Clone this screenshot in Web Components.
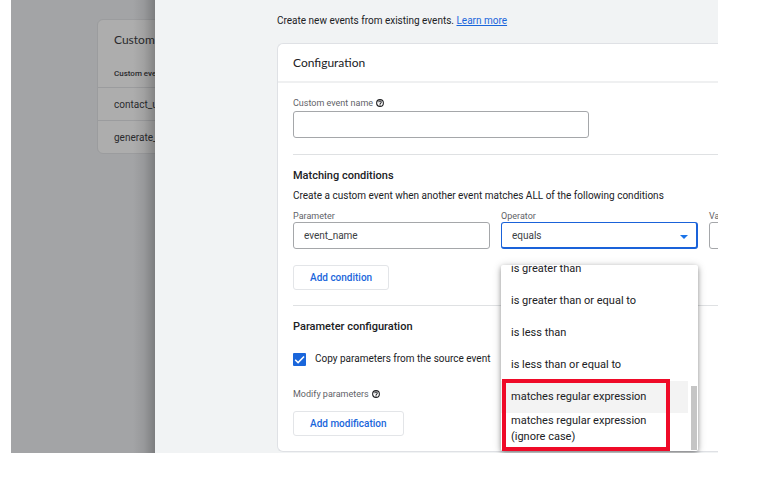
<!DOCTYPE html>
<html lang="en">
<head>
<meta charset="utf-8">
<title>Create event</title>
<style>
body{margin:0;background:#fff;font:10px/16px Roboto,"Liberation Sans",sans-serif;color:#202124}
</style>
</head>
<body>
<event-editor></event-editor>
<script>
const define = (name, html, setup) => {
  const template = document.createElement('template');
  template.innerHTML = '<style>*{box-sizing:border-box}:host{display:block;box-sizing:border-box}</style>' + html;
  customElements.define(name, class extends HTMLElement {
    connectedCallback() {
      if (this.shadowRoot) return;
      this.attachShadow({mode: 'open'}).append(template.content.cloneNode(true));
      if (setup) setup(this, this.shadowRoot);
    }
  });
};

define('help-button', `
<style>
:host{display:inline-flex}
button{display:flex;padding:0;border:0;background:none;color:#202124}
svg{width:8px;height:8px}
</style>
<button type="button" aria-label="Help"><svg viewBox="0 0 18 18" fill="none" stroke="currentColor" stroke-width="2.4"><circle cx="9" cy="9" r="7.6"/><path d="M6.3 7.2a2.7 2.7 0 1 1 4.2 2.2C9.500 10 9 10.400 9 11.600"/><path d="M9 12.600v2"/></svg></button>`);

define('outline-button', `
<style>
:host{display:flex}
button{height:25px;padding:0 16px;border:1px solid #e3e5e8;border-radius:3px;background:#fff;color:#1a66db;font:500 10px/16px Roboto,"Liberation Sans",sans-serif}
</style>
<button type="button"><slot></slot></button>`);

define('form-field', `
<style>
:host{min-width:0;position:relative}
.caption{display:flex;align-items:center;gap:3px;height:12px;font-size:9px;line-height:12px;color:#5f6368}
.box{position:relative;display:flex}
input,select{width:100%;height:27px;margin:0;padding:0 10px;border:1px solid #a5a7aa;border-radius:3px;outline:0;background:#fff;color:#3c4043;font:10px/16px Roboto,"Liberation Sans",sans-serif;appearance:none}
select{padding-top:1px;border:2px solid #1a62d9;border-width:1px 2px 2px 1px}
.arrow{position:absolute;right:10px;top:13px;border:4px solid transparent;border-top:4px solid #1a73e8;border-bottom:0;pointer-events:none}
:host([roomy]) .caption{height:16px}
</style>
<div class="caption"><label for="control"></label><slot name="help"></slot></div>
<div class="box"></div>
<slot></slot>`, (host, root) => {
  root.querySelector('label').textContent = host.getAttribute('label');
  const kind = host.hasAttribute('dropdown') ? 'select' : 'input';
  const control = document.createElement(kind);
  control.id = 'control';
  if (kind === 'select') control.add(new Option(host.getAttribute('value')));
  else control.value = host.getAttribute('value') || '';
  root.querySelector('.box').append(control);
  if (kind === 'select') {
    const arrow = document.createElement('span');
    arrow.className = 'arrow';
    root.querySelector('.box').append(arrow);
  }
});

define('menu-option', `
<style>
:host{display:flex;align-items:center;flex:none;min-height:32px;margin:0 10px 0 0;padding:0 30px 0 10px;font-size:11px}
:host([active]){background:#f3f3f3}
</style>
<slot></slot>`, host => host.setAttribute('role', 'option'));

define('option-menu', `
<style>
:host{position:absolute;left:0;right:0;top:55px;height:186px;z-index:2;background:#fff;box-shadow:0 2px 5px rgba(0,0,0,.35),0 1px 10px rgba(0,0,0,.16);border-radius:2px}
.list{display:flex;flex-direction:column;justify-content:flex-end;height:100%;padding-bottom:6px;overflow:hidden}
.thumb{position:absolute;right:1px;bottom:1px;width:6px;height:64px;background:#c5c5c5}
.mark{position:absolute;left:1px;bottom:0;width:168px;height:72px;border:4px solid #ef0a28}
</style>
<div class="list" role="listbox" aria-label="Operator"><slot></slot></div>
<div class="thumb"></div><div class="mark"></div>`);

define('config-card', `
<style>
:host{background:#fff;border:1px solid #dfe1e5;border-right:0;border-radius:6px 0 0 6px}
h2{margin:0;padding:10px 15px 9px;border-bottom:2px solid #eff0f1;font:400 12px/18px Lato,sans-serif;color:#202124}
.body{padding:0 0 15px 15px}
</style>
<h2><slot name="title"></slot></h2><div class="body"><slot></slot></div>`);

define('form-section', `
<style>
:host{padding-top:13px;border-top:1px solid #dfe1e3}
h3{margin:0;font:500 11px/16px Roboto,"Liberation Sans",sans-serif;color:#202124}
</style>
<h3></h3><slot></slot>`, (host, root) => {
  root.querySelector('h3').textContent = host.getAttribute('heading');
});

define('check-option', `
<style>
label{display:flex;align-items:center;gap:9px;height:16px}
input{appearance:none;flex:none;width:13px;height:13px;margin:0;border-radius:1px;background:#1a66db}
.tick{position:relative;display:flex}
svg{position:absolute;inset:0;pointer-events:none}
</style>
<label><span class="tick"><input type="checkbox" checked><svg viewBox="0 0 12 12" fill="none" stroke="#fff" stroke-width="1.4"><path d="M2 6.200 4.700 8.900 10.200 3.300"/></svg></span><slot></slot></label>`);

define('events-backdrop', `
<style>
:host{padding:19px 0 0 86px;background:#a3a4a6;overflow:hidden;position:relative}
:host::after{content:"";position:absolute;inset:0 0 0 auto;width:22px;background:linear-gradient(90deg,transparent,rgba(0,0,0,.07) 50%,rgba(0,0,0,.24))}
.card{width:240px;background:#adadad;border:1px solid #9b9c9e;border-radius:6px;color:#2a2b2d}
h2{margin:0;padding:11px 16px 10px;font:400 12px/18px Lato,sans-serif}
table{width:100%;border-spacing:0}
th,td{height:33px;padding:1px 16px 0;text-align:left;white-space:nowrap}
th{height:28px;font-weight:500;font-size:8px}
td{border-top:1px solid #9b9c9e}
</style>
<div class="card"><h2>Custom events</h2>
<table><thead><tr><th>Custom event name</th></tr></thead><tbody><tr><td>contact_us</td></tr><tr><td>generate_lead</td></tr></tbody></table></div>`);

define('event-editor', `
<style>
:host{padding:0 41px 41px 11px}
.stage{display:grid;grid-template-columns:144px minmax(0,1fr);overflow:hidden}
main{min-width:0;padding:13px 0 1px 122px;background:#f1f3f4}
p{margin:0;white-space:nowrap}
a{color:#1a66db;text-decoration:underline}
config-card{margin-top:14px}
.name{width:296px;margin:12px 0 16px}
.intro{margin-top:4px}
.row{display:grid;grid-template-columns:repeat(3,197px);gap:11px;margin-top:6px}
.add{margin:16px 0 15px}
check-option{margin-top:16px}
.modify{display:flex;align-items:center;gap:3px;margin:19px 0 9px;font-size:9px;color:#5f6368}
</style>
<div class="stage">
<events-backdrop></events-backdrop>
<main>
<p>Create new events from existing events. <a href="#">Learn more</a></p>
<config-card><span slot="title">Configuration</span>
<form-field class="name" roomy label="Custom event name"><help-button slot="help"></help-button></form-field>
<form-section heading="Matching conditions">
<p class="intro">Create a custom event when another event matches ALL of the following conditions</p>
<div class="row">
<form-field label="Parameter" value="event_name"></form-field>
<form-field label="Operator" value="equals" dropdown>
<option-menu><menu-option>is greater than</menu-option><menu-option>is greater than or equal to</menu-option><menu-option>is less than</menu-option><menu-option>is less than or equal to</menu-option><menu-option active>matches regular expression</menu-option><menu-option>matches regular expression (ignore case)</menu-option></option-menu>
</form-field>
<form-field label="Value"></form-field>
</div>
<outline-button class="add">Add condition</outline-button>
</form-section>
<form-section heading="Parameter configuration">
<check-option>Copy parameters from the source event</check-option>
<div class="modify">Modify parameters <help-button></help-button></div>
<outline-button>Add modification</outline-button>
</form-section>
</config-card>
</main>
</div>`);
</script>
</body>
</html>
